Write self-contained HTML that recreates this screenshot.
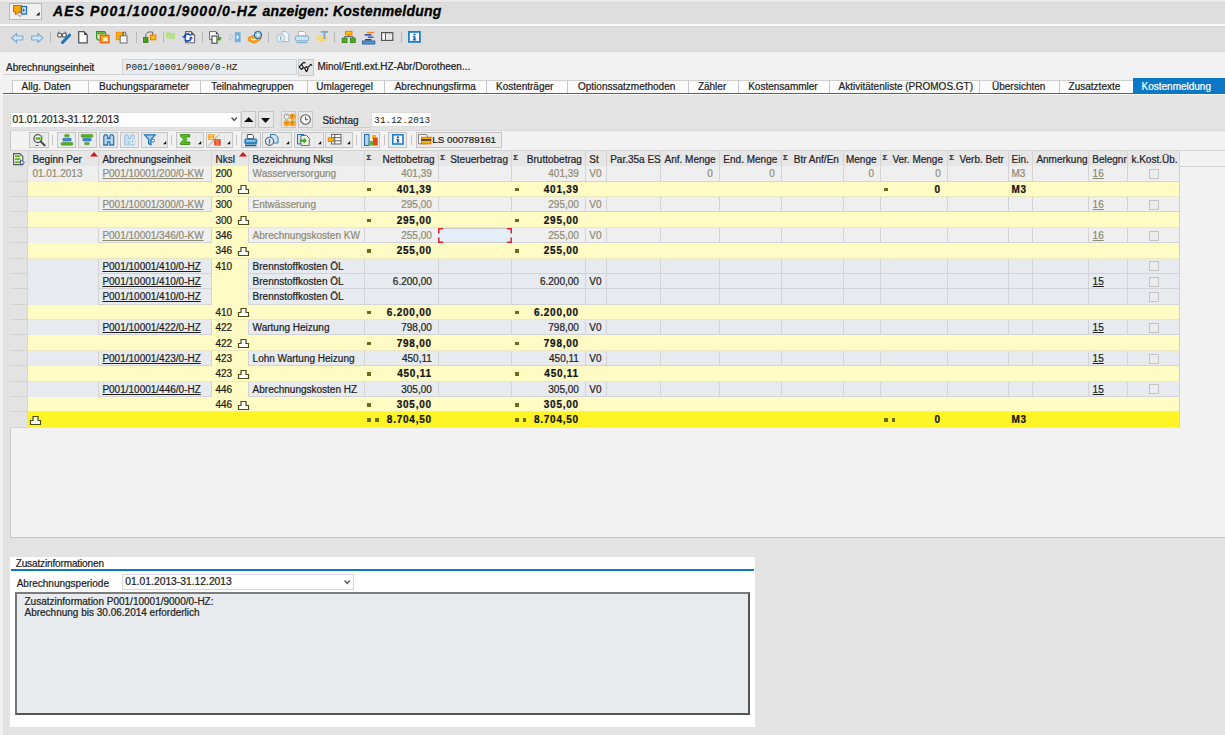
<!DOCTYPE html><html><head><meta charset="utf-8"><style>
html,body{margin:0;padding:0;}
body{width:1225px;height:735px;overflow:hidden;position:relative;background:#f0f0f0;font-family:'Liberation Sans', sans-serif;font-size:10px;color:#222;-webkit-text-stroke-width:0.22px;}
div{box-sizing:border-box;}
.t{position:absolute;white-space:nowrap;line-height:12px;}
svg{position:absolute;overflow:visible;}

</style></head><body>
<div style="position:absolute;left:0px;top:0px;width:1225px;height:25px;background:#dedede;"></div>
<div style="position:absolute;left:0px;top:0px;width:1225px;height:1.5px;background:#ebebeb;"></div>
<div style="position:absolute;left:0px;top:1.5px;width:1225px;height:1px;background:#d6d6d6;"></div>
<div style="position:absolute;left:0px;top:24.4px;width:1225px;height:1.4px;background:#f9f9f9;"></div>
<div style="position:absolute;left:53px;top:3px;white-space:nowrap;font-size:14px;font-weight:bold;font-style:italic;color:#000;letter-spacing:1.1px;line-height:16px;-webkit-text-stroke-width:0.3px;">AES P001/10001/9000/0-HZ</div>
<div style="position:absolute;left:262.6px;top:3px;white-space:nowrap;font-size:14px;font-weight:bold;font-style:italic;color:#000;letter-spacing:0.2px;line-height:16px;-webkit-text-stroke-width:0.3px;">anzeigen: Kostenmeldung</div>
<div style="position:absolute;left:0px;top:25.8px;width:1225px;height:25.7px;background:#dedede;"></div>
<div style="position:absolute;left:0px;top:25.8px;width:1225px;height:1.7px;background:#d8d8d8;"></div>
<div style="position:absolute;left:0px;top:50.5px;width:1225px;height:1px;background:#d9d9d9;"></div>
<div style="position:absolute;left:0px;top:51.5px;width:1225px;height:43.5px;background:#f2f2f2;"></div>
<div style="position:absolute;left:6px;top:61.8px;white-space:nowrap;font-size:10px;color:#222;line-height:12px;">Abrechnungseinheit</div>
<div style="position:absolute;left:3px;top:74px;width:119px;height:1px;background:#cfcfcf;"></div>
<div style="position:absolute;left:122px;top:59px;width:175px;height:15.5px;background:#e9ecef;border:1px solid #cfd3d6;"></div>
<div style="position:absolute;left:125.8px;top:61.5px;white-space:nowrap;font-family:'Liberation Mono', monospace;font-size:9.3px;color:#222;line-height:12px;-webkit-text-stroke-width:0;">P001/10001/9000/0-HZ</div>
<div style="position:absolute;left:298px;top:58.5px;width:16px;height:17px;background:#e6e6e6;border:1px solid #c9c9c9;"></div>
<div style="position:absolute;left:317.4px;top:61px;white-space:nowrap;font-size:10px;color:#222;line-height:12px;">Minol/Entl.ext.HZ-Abr/Dorotheen...</div>
<div style="position:absolute;left:12.2px;top:80px;width:1120.3999999999999px;height:13.5px;background:#fbfbfb;border-top:1px solid #cfcfcf;"></div>
<div style="position:absolute;left:12.2px;top:80px;width:1px;height:13.5px;background:#c6c6c6;"></div>
<div class="t" style="left:21.6px;top:81.2px;color:#222;">Allg. Daten</div>
<div style="position:absolute;left:88.2px;top:80px;width:1px;height:13.5px;background:#c6c6c6;"></div>
<div class="t" style="left:99px;top:81.2px;color:#222;">Buchungsparameter</div>
<div style="position:absolute;left:200.3px;top:80px;width:1px;height:13.5px;background:#c6c6c6;"></div>
<div class="t" style="left:211.3px;top:81.2px;color:#222;">Teilnahmegruppen</div>
<div style="position:absolute;left:306.6px;top:80px;width:1px;height:13.5px;background:#c6c6c6;"></div>
<div class="t" style="left:316.2px;top:81.2px;color:#222;">Umlageregel</div>
<div style="position:absolute;left:383.7px;top:80px;width:1px;height:13.5px;background:#c6c6c6;"></div>
<div class="t" style="left:394.7px;top:81.2px;color:#222;">Abrechnungsfirma</div>
<div style="position:absolute;left:485.9px;top:80px;width:1px;height:13.5px;background:#c6c6c6;"></div>
<div class="t" style="left:496.1px;top:81.2px;color:#222;">Kostenträger</div>
<div style="position:absolute;left:567.3px;top:80px;width:1px;height:13.5px;background:#c6c6c6;"></div>
<div class="t" style="left:578px;top:81.2px;color:#222;">Optionssatzmethoden</div>
<div style="position:absolute;left:688.2px;top:80px;width:1px;height:13.5px;background:#c6c6c6;"></div>
<div class="t" style="left:697.9px;top:81.2px;color:#222;">Zähler</div>
<div style="position:absolute;left:737.6px;top:80px;width:1px;height:13.5px;background:#c6c6c6;"></div>
<div class="t" style="left:748.2px;top:81.2px;color:#222;">Kostensammler</div>
<div style="position:absolute;left:828.5px;top:80px;width:1px;height:13.5px;background:#c6c6c6;"></div>
<div class="t" style="left:838.6px;top:81.2px;color:#222;">Aktivitätenliste (PROMOS.GT)</div>
<div style="position:absolute;left:978.7px;top:80px;width:1px;height:13.5px;background:#c6c6c6;"></div>
<div class="t" style="left:992px;top:81.2px;color:#222;">Übersichten</div>
<div style="position:absolute;left:1058.7px;top:80px;width:1px;height:13.5px;background:#c6c6c6;"></div>
<div class="t" style="left:1068.6px;top:81.2px;color:#222;">Zusatztexte</div>
<div style="position:absolute;left:1132.6px;top:77.7px;width:92.40000000000009px;height:16px;background:#0a78c6;"></div>
<div class="t" style="left:1141.5px;top:80.6px;color:#fff;">Kostenmeldung</div>
<div style="position:absolute;left:3px;top:92.5px;width:1222px;height:1.6px;background:#0a78c6;"></div>
<div style="position:absolute;left:3px;top:94px;width:1222px;height:1px;background:#f8f8f8;"></div>
<div style="position:absolute;left:3px;top:95px;width:1222px;height:640px;background:#e3e3e3;"></div>
<div style="position:absolute;left:9.6px;top:112.3px;width:231px;height:15.4px;background:#fff;border:1px solid #dcdcdc;"></div>
<div style="position:absolute;left:12.5px;top:114px;white-space:nowrap;font-size:10.3px;color:#222;line-height:12px;">01.01.2013-31.12.2013</div>
<div style="position:absolute;left:241.2px;top:111.4px;width:15.300000000000011px;height:17px;background:#e8e8e8;border:1px solid #c6c6c6;"></div>
<div style="position:absolute;left:258.4px;top:111.4px;width:15.300000000000011px;height:17px;background:#e8e8e8;border:1px solid #c6c6c6;"></div>
<div style="position:absolute;left:281px;top:111.4px;width:15.300000000000011px;height:17px;background:#e8e8e8;border:1px solid #c6c6c6;"></div>
<div style="position:absolute;left:298.2px;top:111.4px;width:15.300000000000011px;height:17px;background:#e8e8e8;border:1px solid #c6c6c6;"></div>
<div style="position:absolute;left:320.5px;top:127px;width:50.5px;height:1px;background:#cdcdcd;"></div>
<div style="position:absolute;left:322.4px;top:115.2px;white-space:nowrap;font-size:10px;color:#222;line-height:12px;">Stichtag</div>
<div style="position:absolute;left:371.2px;top:112.3px;width:61.2px;height:15px;background:#fff;border:1px solid #dcdcdc;"></div>
<div style="position:absolute;left:374.3px;top:114.8px;white-space:nowrap;font-family:'Liberation Mono', monospace;font-size:9.3px;color:#222;line-height:12px;-webkit-text-stroke-width:0;">31.12.2013</div>
<div style="position:absolute;left:9.6px;top:129.8px;width:1215.4px;height:408.2px;background:#f2f2f2;border-left:1px solid #c9c9c9;border-bottom:1px solid #c6c6c6;border-top:1px solid #d8d8d8;"></div>
<div style="position:absolute;left:9.6px;top:150.0px;width:1215.4px;height:1px;background:#d2d2d2;"></div>
<div style="position:absolute;left:9.6px;top:165.8px;width:1215.4px;height:1px;background:#cfcfcf;"></div>
<div style="position:absolute;left:10px;top:151.0px;width:1169.7px;height:14.800000000000011px;background:#e6e6e6;"></div>
<div style="position:absolute;left:27.9px;top:151.0px;width:1px;height:14.800000000000011px;background:#d6d6d6;"></div>
<div style="position:absolute;left:97.6px;top:151.0px;width:1px;height:14.800000000000011px;background:#d6d6d6;"></div>
<div style="position:absolute;left:210.9px;top:151.0px;width:1px;height:14.800000000000011px;background:#d6d6d6;"></div>
<div style="position:absolute;left:247.7px;top:151.0px;width:1px;height:14.800000000000011px;background:#d6d6d6;"></div>
<div style="position:absolute;left:363.7px;top:151.0px;width:1px;height:14.800000000000011px;background:#d6d6d6;"></div>
<div style="position:absolute;left:438.1px;top:151.0px;width:1px;height:14.800000000000011px;background:#d6d6d6;"></div>
<div style="position:absolute;left:511.3px;top:151.0px;width:1px;height:14.800000000000011px;background:#d6d6d6;"></div>
<div style="position:absolute;left:585.2px;top:151.0px;width:1px;height:14.800000000000011px;background:#d6d6d6;"></div>
<div style="position:absolute;left:606.1px;top:151.0px;width:1px;height:14.800000000000011px;background:#d6d6d6;"></div>
<div style="position:absolute;left:659.6px;top:151.0px;width:1px;height:14.800000000000011px;background:#d6d6d6;"></div>
<div style="position:absolute;left:719.0px;top:151.0px;width:1px;height:14.800000000000011px;background:#d6d6d6;"></div>
<div style="position:absolute;left:781.0px;top:151.0px;width:1px;height:14.800000000000011px;background:#d6d6d6;"></div>
<div style="position:absolute;left:842.5px;top:151.0px;width:1px;height:14.800000000000011px;background:#d6d6d6;"></div>
<div style="position:absolute;left:880.3px;top:151.0px;width:1px;height:14.800000000000011px;background:#d6d6d6;"></div>
<div style="position:absolute;left:947.1px;top:151.0px;width:1px;height:14.800000000000011px;background:#d6d6d6;"></div>
<div style="position:absolute;left:1008.0px;top:151.0px;width:1px;height:14.800000000000011px;background:#d6d6d6;"></div>
<div style="position:absolute;left:1032.3px;top:151.0px;width:1px;height:14.800000000000011px;background:#d6d6d6;"></div>
<div style="position:absolute;left:1088.2px;top:151.0px;width:1px;height:14.800000000000011px;background:#d6d6d6;"></div>
<div style="position:absolute;left:1126.9px;top:151.0px;width:1px;height:14.800000000000011px;background:#d6d6d6;"></div>
<div style="position:absolute;left:1179.2px;top:151.0px;width:1px;height:14.800000000000011px;background:#d6d6d6;"></div>
<div class="t" style="left:32.4px;top:154.3px;color:#1f1f2a;">Beginn Per</div>
<div class="t" style="left:102.4px;top:154.3px;color:#1f1f2a;">Abrechnungseinheit</div>
<div class="t" style="left:215.5px;top:154.3px;color:#1f1f2a;">Nksl</div>
<div class="t" style="left:252.6px;top:154.3px;color:#1f1f2a;">Bezeichnung Nksl</div>
<div class="t" style="left:234.7px;width:200px;text-align:right;top:154.3px;color:#1f1f2a;">Nettobetrag</div>
<div class="t" style="left:308px;width:200px;text-align:right;top:154.3px;color:#1f1f2a;">Steuerbetrag</div>
<div class="t" style="left:381.9px;width:200px;text-align:right;top:154.3px;color:#1f1f2a;">Bruttobetrag</div>
<div class="t" style="left:589.3px;top:154.3px;color:#1f1f2a;">St</div>
<div class="t" style="left:610.2px;top:154.3px;color:#1f1f2a;">Par.35a ES</div>
<div class="t" style="left:515.7px;width:200px;text-align:right;top:154.3px;color:#1f1f2a;">Anf. Menge</div>
<div class="t" style="left:577.3px;width:200px;text-align:right;top:154.3px;color:#1f1f2a;">End. Menge</div>
<div class="t" style="left:638.9px;width:200px;text-align:right;top:154.3px;color:#1f1f2a;">Btr Anf/En</div>
<div class="t" style="left:676.5px;width:200px;text-align:right;top:154.3px;color:#1f1f2a;">Menge</div>
<div class="t" style="left:743px;width:200px;text-align:right;top:154.3px;color:#1f1f2a;">Ver. Menge</div>
<div class="t" style="left:803.9px;width:200px;text-align:right;top:154.3px;color:#1f1f2a;">Verb. Betr</div>
<div class="t" style="left:1011.5px;top:154.3px;color:#1f1f2a;">Ein.</div>
<div class="t" style="left:1036.4px;top:154.3px;color:#1f1f2a;">Anmerkung</div>
<div class="t" style="left:1092.3px;top:154.3px;color:#1f1f2a;">Belegnr</div>
<div class="t" style="left:1131.4px;top:154.3px;color:#1f1f2a;">k.Kost.Üb.</div>
<div class="t" style="left:366.4px;top:152.0px;font-size:8px;font-weight:bold;color:#333;">&Sigma;</div>
<div class="t" style="left:440.3px;top:152.0px;font-size:8px;font-weight:bold;color:#333;">&Sigma;</div>
<div class="t" style="left:513.3px;top:152.0px;font-size:8px;font-weight:bold;color:#333;">&Sigma;</div>
<div class="t" style="left:783px;top:152.0px;font-size:8px;font-weight:bold;color:#333;">&Sigma;</div>
<div class="t" style="left:882.5px;top:152.0px;font-size:8px;font-weight:bold;color:#333;">&Sigma;</div>
<div class="t" style="left:949.3px;top:152.0px;font-size:8px;font-weight:bold;color:#333;">&Sigma;</div>
<svg style="left:89.5px;top:152.0px" width="8" height="5"><path d="M0,4.5 L4,0 L8,4.5Z" fill="#d2141e"/></svg>
<svg style="left:239px;top:152.0px" width="8" height="5"><path d="M0,4.5 L4,0 L8,4.5Z" fill="#d2141e"/></svg>
<div style="position:absolute;left:10px;top:166.3px;width:18.4px;height:15.38px;background:#e3e3e3;border-bottom:1px solid #d3d3d3;border-right:1px solid #d6d6d6;"></div>
<div style="position:absolute;left:10px;top:181.68px;width:18.4px;height:15.38px;background:#e3e3e3;border-bottom:1px solid #d3d3d3;border-right:1px solid #d6d6d6;"></div>
<div style="position:absolute;left:10px;top:197.06px;width:18.4px;height:15.38px;background:#e3e3e3;border-bottom:1px solid #d3d3d3;border-right:1px solid #d6d6d6;"></div>
<div style="position:absolute;left:10px;top:212.44px;width:18.4px;height:15.38px;background:#e3e3e3;border-bottom:1px solid #d3d3d3;border-right:1px solid #d6d6d6;"></div>
<div style="position:absolute;left:10px;top:227.82000000000002px;width:18.4px;height:15.38px;background:#e3e3e3;border-bottom:1px solid #d3d3d3;border-right:1px solid #d6d6d6;"></div>
<div style="position:absolute;left:10px;top:243.20000000000002px;width:18.4px;height:15.38px;background:#e3e3e3;border-bottom:1px solid #d3d3d3;border-right:1px solid #d6d6d6;"></div>
<div style="position:absolute;left:10px;top:258.58000000000004px;width:18.4px;height:15.38px;background:#e3e3e3;border-bottom:1px solid #d3d3d3;border-right:1px solid #d6d6d6;"></div>
<div style="position:absolute;left:10px;top:273.96000000000004px;width:18.4px;height:15.38px;background:#e3e3e3;border-bottom:1px solid #d3d3d3;border-right:1px solid #d6d6d6;"></div>
<div style="position:absolute;left:10px;top:289.34000000000003px;width:18.4px;height:15.38px;background:#e3e3e3;border-bottom:1px solid #d3d3d3;border-right:1px solid #d6d6d6;"></div>
<div style="position:absolute;left:10px;top:304.72px;width:18.4px;height:15.38px;background:#e3e3e3;border-bottom:1px solid #d3d3d3;border-right:1px solid #d6d6d6;"></div>
<div style="position:absolute;left:10px;top:320.1px;width:18.4px;height:15.38px;background:#e3e3e3;border-bottom:1px solid #d3d3d3;border-right:1px solid #d6d6d6;"></div>
<div style="position:absolute;left:10px;top:335.48px;width:18.4px;height:15.38px;background:#e3e3e3;border-bottom:1px solid #d3d3d3;border-right:1px solid #d6d6d6;"></div>
<div style="position:absolute;left:10px;top:350.86px;width:18.4px;height:15.38px;background:#e3e3e3;border-bottom:1px solid #d3d3d3;border-right:1px solid #d6d6d6;"></div>
<div style="position:absolute;left:10px;top:366.24px;width:18.4px;height:15.38px;background:#e3e3e3;border-bottom:1px solid #d3d3d3;border-right:1px solid #d6d6d6;"></div>
<div style="position:absolute;left:10px;top:381.62px;width:18.4px;height:15.38px;background:#e3e3e3;border-bottom:1px solid #d3d3d3;border-right:1px solid #d6d6d6;"></div>
<div style="position:absolute;left:10px;top:397.0px;width:18.4px;height:15.38px;background:#e3e3e3;border-bottom:1px solid #d3d3d3;border-right:1px solid #d6d6d6;"></div>
<div style="position:absolute;left:10px;top:412.38px;width:18.4px;height:15.38px;background:#e3e3e3;border-bottom:1px solid #d3d3d3;border-right:1px solid #d6d6d6;"></div>
<div style="position:absolute;left:28.4px;top:166.3px;width:1151.3px;height:15.38px;background:#efeff0;"></div>
<div style="position:absolute;left:211.4px;top:166.3px;width:36.79999999999998px;height:15.38px;background:#fffbc4;"></div>
<div style="position:absolute;left:98.1px;top:180.68px;width:113.30000000000001px;height:1px;background:#d2d3d5;"></div>
<div style="position:absolute;left:248.2px;top:180.68px;width:931.5px;height:1px;background:#d2d3d5;"></div>
<div style="position:absolute;left:97.6px;top:166.3px;width:1px;height:15.38px;background:#d2d3d5;"></div>
<div style="position:absolute;left:210.9px;top:166.3px;width:1px;height:15.38px;background:#d2d3d5;"></div>
<div style="position:absolute;left:247.7px;top:166.3px;width:1px;height:15.38px;background:#d2d3d5;"></div>
<div style="position:absolute;left:363.7px;top:166.3px;width:1px;height:15.38px;background:#d2d3d5;"></div>
<div style="position:absolute;left:438.1px;top:166.3px;width:1px;height:15.38px;background:#d2d3d5;"></div>
<div style="position:absolute;left:511.3px;top:166.3px;width:1px;height:15.38px;background:#d2d3d5;"></div>
<div style="position:absolute;left:585.2px;top:166.3px;width:1px;height:15.38px;background:#d2d3d5;"></div>
<div style="position:absolute;left:606.1px;top:166.3px;width:1px;height:15.38px;background:#d2d3d5;"></div>
<div style="position:absolute;left:659.6px;top:166.3px;width:1px;height:15.38px;background:#d2d3d5;"></div>
<div style="position:absolute;left:719.0px;top:166.3px;width:1px;height:15.38px;background:#d2d3d5;"></div>
<div style="position:absolute;left:781.0px;top:166.3px;width:1px;height:15.38px;background:#d2d3d5;"></div>
<div style="position:absolute;left:842.5px;top:166.3px;width:1px;height:15.38px;background:#d2d3d5;"></div>
<div style="position:absolute;left:880.3px;top:166.3px;width:1px;height:15.38px;background:#d2d3d5;"></div>
<div style="position:absolute;left:947.1px;top:166.3px;width:1px;height:15.38px;background:#d2d3d5;"></div>
<div style="position:absolute;left:1008.0px;top:166.3px;width:1px;height:15.38px;background:#d2d3d5;"></div>
<div style="position:absolute;left:1032.3px;top:166.3px;width:1px;height:15.38px;background:#d2d3d5;"></div>
<div style="position:absolute;left:1088.2px;top:166.3px;width:1px;height:15.38px;background:#d2d3d5;"></div>
<div style="position:absolute;left:1126.9px;top:166.3px;width:1px;height:15.38px;background:#d2d3d5;"></div>
<div class="t" style="left:32.4px;top:168.4px;color:#8f8b73;">01.01.2013</div>
<div class="t" style="left:102.4px;top:168.4px;color:#8f8b73;text-decoration:underline;">P001/10001/200/0-KW</div>
<div class="t" style="left:215.5px;top:168.4px;color:#1a1a1a;">200</div>
<div class="t" style="left:252.6px;top:168.4px;color:#8f8b73;">Wasserversorgung</div>
<div class="t" style="left:281.8px;width:150px;text-align:right;top:168.4px;color:#8f8b73;">401,39</div>
<div class="t" style="left:428.9000000000001px;width:150px;text-align:right;top:168.4px;color:#8f8b73;">401,39</div>
<div class="t" style="left:562.7px;width:150px;text-align:right;top:168.4px;color:#8f8b73;">0</div>
<div class="t" style="left:624.7px;width:150px;text-align:right;top:168.4px;color:#8f8b73;">0</div>
<div class="t" style="left:724.0px;width:150px;text-align:right;top:168.4px;color:#8f8b73;">0</div>
<div class="t" style="left:790.8000000000001px;width:150px;text-align:right;top:168.4px;color:#8f8b73;">0</div>
<div class="t" style="left:589.3px;top:168.4px;color:#8f8b73;">V0</div>
<div class="t" style="left:1011.5px;top:168.4px;color:#8f8b73;">M3</div>
<div class="t" style="left:1092.6px;top:168.4px;color:#8f8b73;text-decoration:underline;">16</div>
<div style="position:absolute;left:1149.1px;top:169.10000000000002px;width:10.3px;height:10px;border:1px solid #c3c3c3;background:#ececec;"></div>
<div style="position:absolute;left:28.4px;top:181.68px;width:1151.3px;height:15.38px;background:#fffbc4;border-bottom:1px solid #ece9c0;"></div>
<div class="t" style="left:215.5px;top:183.78px;color:#1a1a1a;">200</div>
<svg style="left:238px;top:185.28px" width="11" height="9"><path d="M3,0.5 H8 V4.5 H10.5 V8.5 H0.5 V4.5 H3 Z" fill="#fff" stroke="#4a4a14" stroke-width="1.2"/></svg>
<div class="t" style="left:281.8px;width:150px;text-align:right;top:183.78px;font-weight:bold;color:#111;letter-spacing:0.75px;">401,39</div>
<div style="position:absolute;left:367.4px;top:187.78px;width:3.5px;height:3.5px;background:#6b6b1f;"></div>
<div class="t" style="left:428.9000000000001px;width:150px;text-align:right;top:183.78px;font-weight:bold;color:#111;letter-spacing:0.75px;">401,39</div>
<div style="position:absolute;left:515.0px;top:187.78px;width:3.5px;height:3.5px;background:#6b6b1f;"></div>
<div class="t" style="left:790.8000000000001px;width:150px;text-align:right;top:183.78px;font-weight:bold;color:#111;letter-spacing:0.75px;">0</div>
<div style="position:absolute;left:884.0px;top:187.78px;width:3.5px;height:3.5px;background:#6b6b1f;"></div>
<div class="t" style="left:1011.5px;top:183.78px;font-weight:bold;color:#111;letter-spacing:0.6px;">M3</div>
<div style="position:absolute;left:28.4px;top:197.06px;width:1151.3px;height:15.38px;background:#efeff0;"></div>
<div style="position:absolute;left:211.4px;top:197.06px;width:36.79999999999998px;height:15.38px;background:#fffbc4;"></div>
<div style="position:absolute;left:98.1px;top:211.44px;width:113.30000000000001px;height:1px;background:#d2d3d5;"></div>
<div style="position:absolute;left:248.2px;top:211.44px;width:931.5px;height:1px;background:#d2d3d5;"></div>
<div style="position:absolute;left:97.6px;top:197.06px;width:1px;height:15.38px;background:#d2d3d5;"></div>
<div style="position:absolute;left:210.9px;top:197.06px;width:1px;height:15.38px;background:#d2d3d5;"></div>
<div style="position:absolute;left:247.7px;top:197.06px;width:1px;height:15.38px;background:#d2d3d5;"></div>
<div style="position:absolute;left:363.7px;top:197.06px;width:1px;height:15.38px;background:#d2d3d5;"></div>
<div style="position:absolute;left:438.1px;top:197.06px;width:1px;height:15.38px;background:#d2d3d5;"></div>
<div style="position:absolute;left:511.3px;top:197.06px;width:1px;height:15.38px;background:#d2d3d5;"></div>
<div style="position:absolute;left:585.2px;top:197.06px;width:1px;height:15.38px;background:#d2d3d5;"></div>
<div style="position:absolute;left:606.1px;top:197.06px;width:1px;height:15.38px;background:#d2d3d5;"></div>
<div style="position:absolute;left:659.6px;top:197.06px;width:1px;height:15.38px;background:#d2d3d5;"></div>
<div style="position:absolute;left:719.0px;top:197.06px;width:1px;height:15.38px;background:#d2d3d5;"></div>
<div style="position:absolute;left:781.0px;top:197.06px;width:1px;height:15.38px;background:#d2d3d5;"></div>
<div style="position:absolute;left:842.5px;top:197.06px;width:1px;height:15.38px;background:#d2d3d5;"></div>
<div style="position:absolute;left:880.3px;top:197.06px;width:1px;height:15.38px;background:#d2d3d5;"></div>
<div style="position:absolute;left:947.1px;top:197.06px;width:1px;height:15.38px;background:#d2d3d5;"></div>
<div style="position:absolute;left:1008.0px;top:197.06px;width:1px;height:15.38px;background:#d2d3d5;"></div>
<div style="position:absolute;left:1032.3px;top:197.06px;width:1px;height:15.38px;background:#d2d3d5;"></div>
<div style="position:absolute;left:1088.2px;top:197.06px;width:1px;height:15.38px;background:#d2d3d5;"></div>
<div style="position:absolute;left:1126.9px;top:197.06px;width:1px;height:15.38px;background:#d2d3d5;"></div>
<div class="t" style="left:102.4px;top:199.16px;color:#8f8b73;text-decoration:underline;">P001/10001/300/0-KW</div>
<div class="t" style="left:215.5px;top:199.16px;color:#1a1a1a;">300</div>
<div class="t" style="left:252.6px;top:199.16px;color:#8f8b73;">Entwässerung</div>
<div class="t" style="left:281.8px;width:150px;text-align:right;top:199.16px;color:#8f8b73;">295,00</div>
<div class="t" style="left:428.9000000000001px;width:150px;text-align:right;top:199.16px;color:#8f8b73;">295,00</div>
<div class="t" style="left:589.3px;top:199.16px;color:#8f8b73;">V0</div>
<div class="t" style="left:1092.6px;top:199.16px;color:#8f8b73;text-decoration:underline;">16</div>
<div style="position:absolute;left:1149.1px;top:199.86px;width:10.3px;height:10px;border:1px solid #c3c3c3;background:#ececec;"></div>
<div style="position:absolute;left:28.4px;top:212.44px;width:1151.3px;height:15.38px;background:#fffbc4;border-bottom:1px solid #ece9c0;"></div>
<div class="t" style="left:215.5px;top:214.54px;color:#1a1a1a;">300</div>
<svg style="left:238px;top:216.04px" width="11" height="9"><path d="M3,0.5 H8 V4.5 H10.5 V8.5 H0.5 V4.5 H3 Z" fill="#fff" stroke="#4a4a14" stroke-width="1.2"/></svg>
<div class="t" style="left:281.8px;width:150px;text-align:right;top:214.54px;font-weight:bold;color:#111;letter-spacing:0.75px;">295,00</div>
<div style="position:absolute;left:367.4px;top:218.54px;width:3.5px;height:3.5px;background:#6b6b1f;"></div>
<div class="t" style="left:428.9000000000001px;width:150px;text-align:right;top:214.54px;font-weight:bold;color:#111;letter-spacing:0.75px;">295,00</div>
<div style="position:absolute;left:515.0px;top:218.54px;width:3.5px;height:3.5px;background:#6b6b1f;"></div>
<div style="position:absolute;left:28.4px;top:227.82000000000002px;width:1151.3px;height:15.38px;background:#efeff0;"></div>
<div style="position:absolute;left:211.4px;top:227.82000000000002px;width:36.79999999999998px;height:15.38px;background:#fffbc4;"></div>
<div style="position:absolute;left:98.1px;top:242.20000000000002px;width:113.30000000000001px;height:1px;background:#d2d3d5;"></div>
<div style="position:absolute;left:248.2px;top:242.20000000000002px;width:931.5px;height:1px;background:#d2d3d5;"></div>
<div style="position:absolute;left:97.6px;top:227.82000000000002px;width:1px;height:15.38px;background:#d2d3d5;"></div>
<div style="position:absolute;left:210.9px;top:227.82000000000002px;width:1px;height:15.38px;background:#d2d3d5;"></div>
<div style="position:absolute;left:247.7px;top:227.82000000000002px;width:1px;height:15.38px;background:#d2d3d5;"></div>
<div style="position:absolute;left:363.7px;top:227.82000000000002px;width:1px;height:15.38px;background:#d2d3d5;"></div>
<div style="position:absolute;left:438.1px;top:227.82000000000002px;width:1px;height:15.38px;background:#d2d3d5;"></div>
<div style="position:absolute;left:511.3px;top:227.82000000000002px;width:1px;height:15.38px;background:#d2d3d5;"></div>
<div style="position:absolute;left:585.2px;top:227.82000000000002px;width:1px;height:15.38px;background:#d2d3d5;"></div>
<div style="position:absolute;left:606.1px;top:227.82000000000002px;width:1px;height:15.38px;background:#d2d3d5;"></div>
<div style="position:absolute;left:659.6px;top:227.82000000000002px;width:1px;height:15.38px;background:#d2d3d5;"></div>
<div style="position:absolute;left:719.0px;top:227.82000000000002px;width:1px;height:15.38px;background:#d2d3d5;"></div>
<div style="position:absolute;left:781.0px;top:227.82000000000002px;width:1px;height:15.38px;background:#d2d3d5;"></div>
<div style="position:absolute;left:842.5px;top:227.82000000000002px;width:1px;height:15.38px;background:#d2d3d5;"></div>
<div style="position:absolute;left:880.3px;top:227.82000000000002px;width:1px;height:15.38px;background:#d2d3d5;"></div>
<div style="position:absolute;left:947.1px;top:227.82000000000002px;width:1px;height:15.38px;background:#d2d3d5;"></div>
<div style="position:absolute;left:1008.0px;top:227.82000000000002px;width:1px;height:15.38px;background:#d2d3d5;"></div>
<div style="position:absolute;left:1032.3px;top:227.82000000000002px;width:1px;height:15.38px;background:#d2d3d5;"></div>
<div style="position:absolute;left:1088.2px;top:227.82000000000002px;width:1px;height:15.38px;background:#d2d3d5;"></div>
<div style="position:absolute;left:1126.9px;top:227.82000000000002px;width:1px;height:15.38px;background:#d2d3d5;"></div>
<div class="t" style="left:102.4px;top:229.92000000000002px;color:#8f8b73;text-decoration:underline;">P001/10001/346/0-KW</div>
<div class="t" style="left:215.5px;top:229.92000000000002px;color:#1a1a1a;">346</div>
<div class="t" style="left:252.6px;top:229.92000000000002px;color:#8f8b73;">Abrechnungskosten KW</div>
<div class="t" style="left:281.8px;width:150px;text-align:right;top:229.92000000000002px;color:#8f8b73;">255,00</div>
<div class="t" style="left:428.9000000000001px;width:150px;text-align:right;top:229.92000000000002px;color:#8f8b73;">255,00</div>
<div class="t" style="left:589.3px;top:229.92000000000002px;color:#8f8b73;">V0</div>
<div class="t" style="left:1092.6px;top:229.92000000000002px;color:#8f8b73;text-decoration:underline;">16</div>
<div style="position:absolute;left:1149.1px;top:230.62000000000003px;width:10.3px;height:10px;border:1px solid #c3c3c3;background:#ececec;"></div>
<div style="position:absolute;left:438.1px;top:228.32000000000002px;width:74px;height:15px;background:#e3eef8;border-top:1px solid #c9c9c9;border-bottom:1px solid #c9c9c9;"></div>
<svg style="left:438.1px;top:228.32000000000002px" width="74" height="15"><path d="M5,0.8 H0.8 V5.5 M0.8,9.5 V14.2 H5 M69,0.8 H73.2 V5.5 M73.2,9.5 V14.2 H69" fill="none" stroke="#e0202a" stroke-width="1.5"/></svg>
<div style="position:absolute;left:28.4px;top:243.20000000000002px;width:1151.3px;height:15.38px;background:#fffbc4;border-bottom:1px solid #ece9c0;"></div>
<div class="t" style="left:215.5px;top:245.3px;color:#1a1a1a;">346</div>
<svg style="left:238px;top:246.8px" width="11" height="9"><path d="M3,0.5 H8 V4.5 H10.5 V8.5 H0.5 V4.5 H3 Z" fill="#fff" stroke="#4a4a14" stroke-width="1.2"/></svg>
<div class="t" style="left:281.8px;width:150px;text-align:right;top:245.3px;font-weight:bold;color:#111;letter-spacing:0.75px;">255,00</div>
<div style="position:absolute;left:367.4px;top:249.3px;width:3.5px;height:3.5px;background:#6b6b1f;"></div>
<div class="t" style="left:428.9000000000001px;width:150px;text-align:right;top:245.3px;font-weight:bold;color:#111;letter-spacing:0.75px;">255,00</div>
<div style="position:absolute;left:515.0px;top:249.3px;width:3.5px;height:3.5px;background:#6b6b1f;"></div>
<div style="position:absolute;left:28.4px;top:258.58000000000004px;width:1151.3px;height:15.38px;background:#e7eaee;"></div>
<div style="position:absolute;left:211.4px;top:258.58000000000004px;width:36.79999999999998px;height:15.38px;background:#fffbc4;"></div>
<div style="position:absolute;left:98.1px;top:272.96000000000004px;width:113.30000000000001px;height:1px;background:#d2d3d5;"></div>
<div style="position:absolute;left:248.2px;top:272.96000000000004px;width:931.5px;height:1px;background:#d2d3d5;"></div>
<div style="position:absolute;left:97.6px;top:258.58000000000004px;width:1px;height:15.38px;background:#d2d3d5;"></div>
<div style="position:absolute;left:210.9px;top:258.58000000000004px;width:1px;height:15.38px;background:#d2d3d5;"></div>
<div style="position:absolute;left:247.7px;top:258.58000000000004px;width:1px;height:15.38px;background:#d2d3d5;"></div>
<div style="position:absolute;left:363.7px;top:258.58000000000004px;width:1px;height:15.38px;background:#d2d3d5;"></div>
<div style="position:absolute;left:438.1px;top:258.58000000000004px;width:1px;height:15.38px;background:#d2d3d5;"></div>
<div style="position:absolute;left:511.3px;top:258.58000000000004px;width:1px;height:15.38px;background:#d2d3d5;"></div>
<div style="position:absolute;left:585.2px;top:258.58000000000004px;width:1px;height:15.38px;background:#d2d3d5;"></div>
<div style="position:absolute;left:606.1px;top:258.58000000000004px;width:1px;height:15.38px;background:#d2d3d5;"></div>
<div style="position:absolute;left:659.6px;top:258.58000000000004px;width:1px;height:15.38px;background:#d2d3d5;"></div>
<div style="position:absolute;left:719.0px;top:258.58000000000004px;width:1px;height:15.38px;background:#d2d3d5;"></div>
<div style="position:absolute;left:781.0px;top:258.58000000000004px;width:1px;height:15.38px;background:#d2d3d5;"></div>
<div style="position:absolute;left:842.5px;top:258.58000000000004px;width:1px;height:15.38px;background:#d2d3d5;"></div>
<div style="position:absolute;left:880.3px;top:258.58000000000004px;width:1px;height:15.38px;background:#d2d3d5;"></div>
<div style="position:absolute;left:947.1px;top:258.58000000000004px;width:1px;height:15.38px;background:#d2d3d5;"></div>
<div style="position:absolute;left:1008.0px;top:258.58000000000004px;width:1px;height:15.38px;background:#d2d3d5;"></div>
<div style="position:absolute;left:1032.3px;top:258.58000000000004px;width:1px;height:15.38px;background:#d2d3d5;"></div>
<div style="position:absolute;left:1088.2px;top:258.58000000000004px;width:1px;height:15.38px;background:#d2d3d5;"></div>
<div style="position:absolute;left:1126.9px;top:258.58000000000004px;width:1px;height:15.38px;background:#d2d3d5;"></div>
<div class="t" style="left:102.4px;top:260.68000000000006px;color:#1e1e1e;text-decoration:underline;">P001/10001/410/0-HZ</div>
<div class="t" style="left:215.5px;top:260.68000000000006px;color:#1a1a1a;">410</div>
<div class="t" style="left:252.6px;top:260.68000000000006px;color:#1e1e1e;">Brennstoffkosten ÖL</div>
<div style="position:absolute;left:1149.1px;top:261.38000000000005px;width:10.3px;height:10px;border:1px solid #c3c3c3;background:#ececec;"></div>
<div style="position:absolute;left:28.4px;top:273.96000000000004px;width:1151.3px;height:15.38px;background:#e7eaee;"></div>
<div style="position:absolute;left:211.4px;top:273.96000000000004px;width:36.79999999999998px;height:15.38px;background:#fffbc4;"></div>
<div style="position:absolute;left:98.1px;top:288.34000000000003px;width:113.30000000000001px;height:1px;background:#d2d3d5;"></div>
<div style="position:absolute;left:248.2px;top:288.34000000000003px;width:931.5px;height:1px;background:#d2d3d5;"></div>
<div style="position:absolute;left:97.6px;top:273.96000000000004px;width:1px;height:15.38px;background:#d2d3d5;"></div>
<div style="position:absolute;left:210.9px;top:273.96000000000004px;width:1px;height:15.38px;background:#d2d3d5;"></div>
<div style="position:absolute;left:247.7px;top:273.96000000000004px;width:1px;height:15.38px;background:#d2d3d5;"></div>
<div style="position:absolute;left:363.7px;top:273.96000000000004px;width:1px;height:15.38px;background:#d2d3d5;"></div>
<div style="position:absolute;left:438.1px;top:273.96000000000004px;width:1px;height:15.38px;background:#d2d3d5;"></div>
<div style="position:absolute;left:511.3px;top:273.96000000000004px;width:1px;height:15.38px;background:#d2d3d5;"></div>
<div style="position:absolute;left:585.2px;top:273.96000000000004px;width:1px;height:15.38px;background:#d2d3d5;"></div>
<div style="position:absolute;left:606.1px;top:273.96000000000004px;width:1px;height:15.38px;background:#d2d3d5;"></div>
<div style="position:absolute;left:659.6px;top:273.96000000000004px;width:1px;height:15.38px;background:#d2d3d5;"></div>
<div style="position:absolute;left:719.0px;top:273.96000000000004px;width:1px;height:15.38px;background:#d2d3d5;"></div>
<div style="position:absolute;left:781.0px;top:273.96000000000004px;width:1px;height:15.38px;background:#d2d3d5;"></div>
<div style="position:absolute;left:842.5px;top:273.96000000000004px;width:1px;height:15.38px;background:#d2d3d5;"></div>
<div style="position:absolute;left:880.3px;top:273.96000000000004px;width:1px;height:15.38px;background:#d2d3d5;"></div>
<div style="position:absolute;left:947.1px;top:273.96000000000004px;width:1px;height:15.38px;background:#d2d3d5;"></div>
<div style="position:absolute;left:1008.0px;top:273.96000000000004px;width:1px;height:15.38px;background:#d2d3d5;"></div>
<div style="position:absolute;left:1032.3px;top:273.96000000000004px;width:1px;height:15.38px;background:#d2d3d5;"></div>
<div style="position:absolute;left:1088.2px;top:273.96000000000004px;width:1px;height:15.38px;background:#d2d3d5;"></div>
<div style="position:absolute;left:1126.9px;top:273.96000000000004px;width:1px;height:15.38px;background:#d2d3d5;"></div>
<div class="t" style="left:102.4px;top:276.06000000000006px;color:#1e1e1e;text-decoration:underline;">P001/10001/410/0-HZ</div>
<div class="t" style="left:252.6px;top:276.06000000000006px;color:#1e1e1e;">Brennstoffkosten ÖL</div>
<div class="t" style="left:281.8px;width:150px;text-align:right;top:276.06000000000006px;color:#1e1e1e;">6.200,00</div>
<div class="t" style="left:428.9000000000001px;width:150px;text-align:right;top:276.06000000000006px;color:#1e1e1e;">6.200,00</div>
<div class="t" style="left:589.3px;top:276.06000000000006px;color:#1e1e1e;">V0</div>
<div class="t" style="left:1092.6px;top:276.06000000000006px;color:#1e1e1e;text-decoration:underline;">15</div>
<div style="position:absolute;left:1149.1px;top:276.76000000000005px;width:10.3px;height:10px;border:1px solid #c3c3c3;background:#ececec;"></div>
<div style="position:absolute;left:28.4px;top:289.34000000000003px;width:1151.3px;height:15.38px;background:#e7eaee;"></div>
<div style="position:absolute;left:211.4px;top:289.34000000000003px;width:36.79999999999998px;height:15.38px;background:#fffbc4;"></div>
<div style="position:absolute;left:98.1px;top:303.72px;width:113.30000000000001px;height:1px;background:#d2d3d5;"></div>
<div style="position:absolute;left:248.2px;top:303.72px;width:931.5px;height:1px;background:#d2d3d5;"></div>
<div style="position:absolute;left:97.6px;top:289.34000000000003px;width:1px;height:15.38px;background:#d2d3d5;"></div>
<div style="position:absolute;left:210.9px;top:289.34000000000003px;width:1px;height:15.38px;background:#d2d3d5;"></div>
<div style="position:absolute;left:247.7px;top:289.34000000000003px;width:1px;height:15.38px;background:#d2d3d5;"></div>
<div style="position:absolute;left:363.7px;top:289.34000000000003px;width:1px;height:15.38px;background:#d2d3d5;"></div>
<div style="position:absolute;left:438.1px;top:289.34000000000003px;width:1px;height:15.38px;background:#d2d3d5;"></div>
<div style="position:absolute;left:511.3px;top:289.34000000000003px;width:1px;height:15.38px;background:#d2d3d5;"></div>
<div style="position:absolute;left:585.2px;top:289.34000000000003px;width:1px;height:15.38px;background:#d2d3d5;"></div>
<div style="position:absolute;left:606.1px;top:289.34000000000003px;width:1px;height:15.38px;background:#d2d3d5;"></div>
<div style="position:absolute;left:659.6px;top:289.34000000000003px;width:1px;height:15.38px;background:#d2d3d5;"></div>
<div style="position:absolute;left:719.0px;top:289.34000000000003px;width:1px;height:15.38px;background:#d2d3d5;"></div>
<div style="position:absolute;left:781.0px;top:289.34000000000003px;width:1px;height:15.38px;background:#d2d3d5;"></div>
<div style="position:absolute;left:842.5px;top:289.34000000000003px;width:1px;height:15.38px;background:#d2d3d5;"></div>
<div style="position:absolute;left:880.3px;top:289.34000000000003px;width:1px;height:15.38px;background:#d2d3d5;"></div>
<div style="position:absolute;left:947.1px;top:289.34000000000003px;width:1px;height:15.38px;background:#d2d3d5;"></div>
<div style="position:absolute;left:1008.0px;top:289.34000000000003px;width:1px;height:15.38px;background:#d2d3d5;"></div>
<div style="position:absolute;left:1032.3px;top:289.34000000000003px;width:1px;height:15.38px;background:#d2d3d5;"></div>
<div style="position:absolute;left:1088.2px;top:289.34000000000003px;width:1px;height:15.38px;background:#d2d3d5;"></div>
<div style="position:absolute;left:1126.9px;top:289.34000000000003px;width:1px;height:15.38px;background:#d2d3d5;"></div>
<div class="t" style="left:102.4px;top:291.44000000000005px;color:#1e1e1e;text-decoration:underline;">P001/10001/410/0-HZ</div>
<div class="t" style="left:252.6px;top:291.44000000000005px;color:#1e1e1e;">Brennstoffkosten ÖL</div>
<div style="position:absolute;left:1149.1px;top:292.14000000000004px;width:10.3px;height:10px;border:1px solid #c3c3c3;background:#ececec;"></div>
<div style="position:absolute;left:28.4px;top:304.72px;width:1151.3px;height:15.38px;background:#fffbc4;border-bottom:1px solid #ece9c0;"></div>
<div class="t" style="left:215.5px;top:306.82000000000005px;color:#1a1a1a;">410</div>
<svg style="left:238px;top:308.32000000000005px" width="11" height="9"><path d="M3,0.5 H8 V4.5 H10.5 V8.5 H0.5 V4.5 H3 Z" fill="#fff" stroke="#4a4a14" stroke-width="1.2"/></svg>
<div class="t" style="left:281.8px;width:150px;text-align:right;top:306.82000000000005px;font-weight:bold;color:#111;letter-spacing:0.75px;">6.200,00</div>
<div style="position:absolute;left:367.4px;top:310.82000000000005px;width:3.5px;height:3.5px;background:#6b6b1f;"></div>
<div class="t" style="left:428.9000000000001px;width:150px;text-align:right;top:306.82000000000005px;font-weight:bold;color:#111;letter-spacing:0.75px;">6.200,00</div>
<div style="position:absolute;left:515.0px;top:310.82000000000005px;width:3.5px;height:3.5px;background:#6b6b1f;"></div>
<div style="position:absolute;left:28.4px;top:320.1px;width:1151.3px;height:15.38px;background:#e7eaee;"></div>
<div style="position:absolute;left:211.4px;top:320.1px;width:36.79999999999998px;height:15.38px;background:#fffbc4;"></div>
<div style="position:absolute;left:98.1px;top:334.48px;width:113.30000000000001px;height:1px;background:#d2d3d5;"></div>
<div style="position:absolute;left:248.2px;top:334.48px;width:931.5px;height:1px;background:#d2d3d5;"></div>
<div style="position:absolute;left:97.6px;top:320.1px;width:1px;height:15.38px;background:#d2d3d5;"></div>
<div style="position:absolute;left:210.9px;top:320.1px;width:1px;height:15.38px;background:#d2d3d5;"></div>
<div style="position:absolute;left:247.7px;top:320.1px;width:1px;height:15.38px;background:#d2d3d5;"></div>
<div style="position:absolute;left:363.7px;top:320.1px;width:1px;height:15.38px;background:#d2d3d5;"></div>
<div style="position:absolute;left:438.1px;top:320.1px;width:1px;height:15.38px;background:#d2d3d5;"></div>
<div style="position:absolute;left:511.3px;top:320.1px;width:1px;height:15.38px;background:#d2d3d5;"></div>
<div style="position:absolute;left:585.2px;top:320.1px;width:1px;height:15.38px;background:#d2d3d5;"></div>
<div style="position:absolute;left:606.1px;top:320.1px;width:1px;height:15.38px;background:#d2d3d5;"></div>
<div style="position:absolute;left:659.6px;top:320.1px;width:1px;height:15.38px;background:#d2d3d5;"></div>
<div style="position:absolute;left:719.0px;top:320.1px;width:1px;height:15.38px;background:#d2d3d5;"></div>
<div style="position:absolute;left:781.0px;top:320.1px;width:1px;height:15.38px;background:#d2d3d5;"></div>
<div style="position:absolute;left:842.5px;top:320.1px;width:1px;height:15.38px;background:#d2d3d5;"></div>
<div style="position:absolute;left:880.3px;top:320.1px;width:1px;height:15.38px;background:#d2d3d5;"></div>
<div style="position:absolute;left:947.1px;top:320.1px;width:1px;height:15.38px;background:#d2d3d5;"></div>
<div style="position:absolute;left:1008.0px;top:320.1px;width:1px;height:15.38px;background:#d2d3d5;"></div>
<div style="position:absolute;left:1032.3px;top:320.1px;width:1px;height:15.38px;background:#d2d3d5;"></div>
<div style="position:absolute;left:1088.2px;top:320.1px;width:1px;height:15.38px;background:#d2d3d5;"></div>
<div style="position:absolute;left:1126.9px;top:320.1px;width:1px;height:15.38px;background:#d2d3d5;"></div>
<div class="t" style="left:102.4px;top:322.20000000000005px;color:#1e1e1e;text-decoration:underline;">P001/10001/422/0-HZ</div>
<div class="t" style="left:215.5px;top:322.20000000000005px;color:#1a1a1a;">422</div>
<div class="t" style="left:252.6px;top:322.20000000000005px;color:#1e1e1e;">Wartung Heizung</div>
<div class="t" style="left:281.8px;width:150px;text-align:right;top:322.20000000000005px;color:#1e1e1e;">798,00</div>
<div class="t" style="left:428.9000000000001px;width:150px;text-align:right;top:322.20000000000005px;color:#1e1e1e;">798,00</div>
<div class="t" style="left:589.3px;top:322.20000000000005px;color:#1e1e1e;">V0</div>
<div class="t" style="left:1092.6px;top:322.20000000000005px;color:#1e1e1e;text-decoration:underline;">15</div>
<div style="position:absolute;left:1149.1px;top:322.90000000000003px;width:10.3px;height:10px;border:1px solid #c3c3c3;background:#ececec;"></div>
<div style="position:absolute;left:28.4px;top:335.48px;width:1151.3px;height:15.38px;background:#fffbc4;border-bottom:1px solid #ece9c0;"></div>
<div class="t" style="left:215.5px;top:337.58000000000004px;color:#1a1a1a;">422</div>
<svg style="left:238px;top:339.08000000000004px" width="11" height="9"><path d="M3,0.5 H8 V4.5 H10.5 V8.5 H0.5 V4.5 H3 Z" fill="#fff" stroke="#4a4a14" stroke-width="1.2"/></svg>
<div class="t" style="left:281.8px;width:150px;text-align:right;top:337.58000000000004px;font-weight:bold;color:#111;letter-spacing:0.75px;">798,00</div>
<div style="position:absolute;left:367.4px;top:341.58000000000004px;width:3.5px;height:3.5px;background:#6b6b1f;"></div>
<div class="t" style="left:428.9000000000001px;width:150px;text-align:right;top:337.58000000000004px;font-weight:bold;color:#111;letter-spacing:0.75px;">798,00</div>
<div style="position:absolute;left:515.0px;top:341.58000000000004px;width:3.5px;height:3.5px;background:#6b6b1f;"></div>
<div style="position:absolute;left:28.4px;top:350.86px;width:1151.3px;height:15.38px;background:#e7eaee;"></div>
<div style="position:absolute;left:211.4px;top:350.86px;width:36.79999999999998px;height:15.38px;background:#fffbc4;"></div>
<div style="position:absolute;left:98.1px;top:365.24px;width:113.30000000000001px;height:1px;background:#d2d3d5;"></div>
<div style="position:absolute;left:248.2px;top:365.24px;width:931.5px;height:1px;background:#d2d3d5;"></div>
<div style="position:absolute;left:97.6px;top:350.86px;width:1px;height:15.38px;background:#d2d3d5;"></div>
<div style="position:absolute;left:210.9px;top:350.86px;width:1px;height:15.38px;background:#d2d3d5;"></div>
<div style="position:absolute;left:247.7px;top:350.86px;width:1px;height:15.38px;background:#d2d3d5;"></div>
<div style="position:absolute;left:363.7px;top:350.86px;width:1px;height:15.38px;background:#d2d3d5;"></div>
<div style="position:absolute;left:438.1px;top:350.86px;width:1px;height:15.38px;background:#d2d3d5;"></div>
<div style="position:absolute;left:511.3px;top:350.86px;width:1px;height:15.38px;background:#d2d3d5;"></div>
<div style="position:absolute;left:585.2px;top:350.86px;width:1px;height:15.38px;background:#d2d3d5;"></div>
<div style="position:absolute;left:606.1px;top:350.86px;width:1px;height:15.38px;background:#d2d3d5;"></div>
<div style="position:absolute;left:659.6px;top:350.86px;width:1px;height:15.38px;background:#d2d3d5;"></div>
<div style="position:absolute;left:719.0px;top:350.86px;width:1px;height:15.38px;background:#d2d3d5;"></div>
<div style="position:absolute;left:781.0px;top:350.86px;width:1px;height:15.38px;background:#d2d3d5;"></div>
<div style="position:absolute;left:842.5px;top:350.86px;width:1px;height:15.38px;background:#d2d3d5;"></div>
<div style="position:absolute;left:880.3px;top:350.86px;width:1px;height:15.38px;background:#d2d3d5;"></div>
<div style="position:absolute;left:947.1px;top:350.86px;width:1px;height:15.38px;background:#d2d3d5;"></div>
<div style="position:absolute;left:1008.0px;top:350.86px;width:1px;height:15.38px;background:#d2d3d5;"></div>
<div style="position:absolute;left:1032.3px;top:350.86px;width:1px;height:15.38px;background:#d2d3d5;"></div>
<div style="position:absolute;left:1088.2px;top:350.86px;width:1px;height:15.38px;background:#d2d3d5;"></div>
<div style="position:absolute;left:1126.9px;top:350.86px;width:1px;height:15.38px;background:#d2d3d5;"></div>
<div class="t" style="left:102.4px;top:352.96000000000004px;color:#1e1e1e;text-decoration:underline;">P001/10001/423/0-HZ</div>
<div class="t" style="left:215.5px;top:352.96000000000004px;color:#1a1a1a;">423</div>
<div class="t" style="left:252.6px;top:352.96000000000004px;color:#1e1e1e;">Lohn Wartung Heizung</div>
<div class="t" style="left:281.8px;width:150px;text-align:right;top:352.96000000000004px;color:#1e1e1e;">450,11</div>
<div class="t" style="left:428.9000000000001px;width:150px;text-align:right;top:352.96000000000004px;color:#1e1e1e;">450,11</div>
<div class="t" style="left:589.3px;top:352.96000000000004px;color:#1e1e1e;">V0</div>
<div class="t" style="left:1092.6px;top:352.96000000000004px;color:#1e1e1e;text-decoration:underline;">15</div>
<div style="position:absolute;left:1149.1px;top:353.66px;width:10.3px;height:10px;border:1px solid #c3c3c3;background:#ececec;"></div>
<div style="position:absolute;left:28.4px;top:366.24px;width:1151.3px;height:15.38px;background:#fffbc4;border-bottom:1px solid #ece9c0;"></div>
<div class="t" style="left:215.5px;top:368.34000000000003px;color:#1a1a1a;">423</div>
<svg style="left:238px;top:369.84000000000003px" width="11" height="9"><path d="M3,0.5 H8 V4.5 H10.5 V8.5 H0.5 V4.5 H3 Z" fill="#fff" stroke="#4a4a14" stroke-width="1.2"/></svg>
<div class="t" style="left:281.8px;width:150px;text-align:right;top:368.34000000000003px;font-weight:bold;color:#111;letter-spacing:0.75px;">450,11</div>
<div style="position:absolute;left:367.4px;top:372.34000000000003px;width:3.5px;height:3.5px;background:#6b6b1f;"></div>
<div class="t" style="left:428.9000000000001px;width:150px;text-align:right;top:368.34000000000003px;font-weight:bold;color:#111;letter-spacing:0.75px;">450,11</div>
<div style="position:absolute;left:515.0px;top:372.34000000000003px;width:3.5px;height:3.5px;background:#6b6b1f;"></div>
<div style="position:absolute;left:28.4px;top:381.62px;width:1151.3px;height:15.38px;background:#e7eaee;"></div>
<div style="position:absolute;left:211.4px;top:381.62px;width:36.79999999999998px;height:15.38px;background:#fffbc4;"></div>
<div style="position:absolute;left:98.1px;top:396.0px;width:113.30000000000001px;height:1px;background:#d2d3d5;"></div>
<div style="position:absolute;left:248.2px;top:396.0px;width:931.5px;height:1px;background:#d2d3d5;"></div>
<div style="position:absolute;left:97.6px;top:381.62px;width:1px;height:15.38px;background:#d2d3d5;"></div>
<div style="position:absolute;left:210.9px;top:381.62px;width:1px;height:15.38px;background:#d2d3d5;"></div>
<div style="position:absolute;left:247.7px;top:381.62px;width:1px;height:15.38px;background:#d2d3d5;"></div>
<div style="position:absolute;left:363.7px;top:381.62px;width:1px;height:15.38px;background:#d2d3d5;"></div>
<div style="position:absolute;left:438.1px;top:381.62px;width:1px;height:15.38px;background:#d2d3d5;"></div>
<div style="position:absolute;left:511.3px;top:381.62px;width:1px;height:15.38px;background:#d2d3d5;"></div>
<div style="position:absolute;left:585.2px;top:381.62px;width:1px;height:15.38px;background:#d2d3d5;"></div>
<div style="position:absolute;left:606.1px;top:381.62px;width:1px;height:15.38px;background:#d2d3d5;"></div>
<div style="position:absolute;left:659.6px;top:381.62px;width:1px;height:15.38px;background:#d2d3d5;"></div>
<div style="position:absolute;left:719.0px;top:381.62px;width:1px;height:15.38px;background:#d2d3d5;"></div>
<div style="position:absolute;left:781.0px;top:381.62px;width:1px;height:15.38px;background:#d2d3d5;"></div>
<div style="position:absolute;left:842.5px;top:381.62px;width:1px;height:15.38px;background:#d2d3d5;"></div>
<div style="position:absolute;left:880.3px;top:381.62px;width:1px;height:15.38px;background:#d2d3d5;"></div>
<div style="position:absolute;left:947.1px;top:381.62px;width:1px;height:15.38px;background:#d2d3d5;"></div>
<div style="position:absolute;left:1008.0px;top:381.62px;width:1px;height:15.38px;background:#d2d3d5;"></div>
<div style="position:absolute;left:1032.3px;top:381.62px;width:1px;height:15.38px;background:#d2d3d5;"></div>
<div style="position:absolute;left:1088.2px;top:381.62px;width:1px;height:15.38px;background:#d2d3d5;"></div>
<div style="position:absolute;left:1126.9px;top:381.62px;width:1px;height:15.38px;background:#d2d3d5;"></div>
<div class="t" style="left:102.4px;top:383.72px;color:#1e1e1e;text-decoration:underline;">P001/10001/446/0-HZ</div>
<div class="t" style="left:215.5px;top:383.72px;color:#1a1a1a;">446</div>
<div class="t" style="left:252.6px;top:383.72px;color:#1e1e1e;">Abrechnungskosten HZ</div>
<div class="t" style="left:281.8px;width:150px;text-align:right;top:383.72px;color:#1e1e1e;">305,00</div>
<div class="t" style="left:428.9000000000001px;width:150px;text-align:right;top:383.72px;color:#1e1e1e;">305,00</div>
<div class="t" style="left:589.3px;top:383.72px;color:#1e1e1e;">V0</div>
<div class="t" style="left:1092.6px;top:383.72px;color:#1e1e1e;text-decoration:underline;">15</div>
<div style="position:absolute;left:1149.1px;top:384.42px;width:10.3px;height:10px;border:1px solid #c3c3c3;background:#ececec;"></div>
<div style="position:absolute;left:28.4px;top:397.0px;width:1151.3px;height:15.38px;background:#fffbc4;border-bottom:1px solid #ece9c0;"></div>
<div class="t" style="left:215.5px;top:399.1px;color:#1a1a1a;">446</div>
<svg style="left:238px;top:400.6px" width="11" height="9"><path d="M3,0.5 H8 V4.5 H10.5 V8.5 H0.5 V4.5 H3 Z" fill="#fff" stroke="#4a4a14" stroke-width="1.2"/></svg>
<div class="t" style="left:281.8px;width:150px;text-align:right;top:399.1px;font-weight:bold;color:#111;letter-spacing:0.75px;">305,00</div>
<div style="position:absolute;left:367.4px;top:403.1px;width:3.5px;height:3.5px;background:#6b6b1f;"></div>
<div class="t" style="left:428.9000000000001px;width:150px;text-align:right;top:399.1px;font-weight:bold;color:#111;letter-spacing:0.75px;">305,00</div>
<div style="position:absolute;left:515.0px;top:403.1px;width:3.5px;height:3.5px;background:#6b6b1f;"></div>
<div style="position:absolute;left:28.4px;top:412.38px;width:1151.3px;height:15.38px;background:#fff526;border-bottom:1px solid #ece9c0;"></div>
<svg style="left:30px;top:415.98px" width="11" height="9"><path d="M3,0.5 H8 V4.5 H10.5 V8.5 H0.5 V4.5 H3 Z" fill="#fff" stroke="#4a4a14" stroke-width="1.2"/></svg>
<div class="t" style="left:281.8px;width:150px;text-align:right;top:414.48px;font-weight:bold;color:#111;letter-spacing:0.75px;">8.704,50</div>
<div style="position:absolute;left:367.4px;top:418.48px;width:3.5px;height:3.5px;background:#6b6b1f;"></div>
<div style="position:absolute;left:375.0px;top:418.48px;width:3.5px;height:3.5px;background:#6b6b1f;"></div>
<div class="t" style="left:428.9000000000001px;width:150px;text-align:right;top:414.48px;font-weight:bold;color:#111;letter-spacing:0.75px;">8.704,50</div>
<div style="position:absolute;left:515.0px;top:418.48px;width:3.5px;height:3.5px;background:#6b6b1f;"></div>
<div style="position:absolute;left:522.6px;top:418.48px;width:3.5px;height:3.5px;background:#6b6b1f;"></div>
<div class="t" style="left:790.8000000000001px;width:150px;text-align:right;top:414.48px;font-weight:bold;color:#111;letter-spacing:0.75px;">0</div>
<div style="position:absolute;left:884.0px;top:418.48px;width:3.5px;height:3.5px;background:#6b6b1f;"></div>
<div style="position:absolute;left:891.6px;top:418.48px;width:3.5px;height:3.5px;background:#6b6b1f;"></div>
<div class="t" style="left:1011.5px;top:414.48px;font-weight:bold;color:#111;letter-spacing:0.6px;">M3</div>
<div style="position:absolute;left:1179.2px;top:166.3px;width:1px;height:261.46000000000004px;background:#d0d0d0;"></div>
<div style="position:absolute;left:9.8px;top:557.3px;width:745px;height:170px;background:#fff;"></div>
<div style="position:absolute;left:11.3px;top:569.3px;width:743px;height:1.6px;background:#0a78c6;"></div>
<div style="position:absolute;left:15.7px;top:558.3px;white-space:nowrap;font-size:10px;letter-spacing:-0.13px;color:#222;line-height:12px;">Zusatzinformationen</div>
<div style="position:absolute;left:16.7px;top:577.8px;white-space:nowrap;font-size:10px;color:#222;line-height:12px;">Abrechnungsperiode</div>
<div style="position:absolute;left:122px;top:574.3px;width:231.5px;height:15.4px;background:#fff;border:1px solid #d6d6d6;"></div>
<div style="position:absolute;left:125.3px;top:576px;white-space:nowrap;font-size:10.3px;color:#222;line-height:12px;">01.01.2013-31.12.2013</div>
<svg style="left:343.8px;top:580px" width="6.5" height="4.5"><path d="M0.6,0.6 L3.2,3.4 L5.8,0.6" fill="none" stroke="#555" stroke-width="1.5"/></svg>
<div style="position:absolute;left:14.7px;top:592.1px;width:735.5px;height:123px;background:#e8ebee;border:2px solid #555;border-top-color:#7c7c7c;border-left-color:#777;"></div>
<div style="position:absolute;left:24.5px;top:596px;white-space:nowrap;font-size:10px;color:#222;line-height:11.2px;">Zusatzinformation P001/10001/9000/0-HZ:<br>Abrechnung bis 30.06.2014 erforderlich</div>
<div style="position:absolute;left:9.3px;top:3.4px;width:32.3px;height:16.2px;border:1.3px solid #b4bcc8;background:#f0f0f0;"></div>
<svg style="left:12.5px;top:4.5px" width="15" height="11" viewBox="0 0 15 11"><path d="M0.5,0.5 H8.5 V7 L5,7 L2.5,10 V7 H0.5Z" fill="#f6a800" stroke="#e06000" stroke-width="1"/><rect x="8.5" y="1.5" width="5" height="7.5" fill="#cfe4f6" stroke="#1f6fae" stroke-width="1.3"/><path d="M10,3.3 L12.2,5.2 L10,7Z" fill="#1f6fae"/><path d="M7,7.5 L9,9.5 L7,11.5 L5,9.5Z" fill="#fff" stroke="#555" stroke-width="0.8"/></svg>
<svg style="left:35.5px;top:12.3px" width="4" height="4" viewBox="0 0 4 4"><path d="M3.6,0 V3.6 H0Z" fill="#111"/></svg>
<svg style="left:10.8px;top:32.5px" width="12.5" height="10" viewBox="0 0 12.5 10"><path d="M0.7,5 L5.5,0.6 V3 H11.8 V7 H5.5 V9.4Z" fill="#d3e6f5" stroke="#7fa9cc" stroke-width="1.1"/></svg>
<svg style="left:30.6px;top:32.5px" width="12.5" height="10" viewBox="0 0 12.5 10"><path d="M11.8,5 L7,0.6 V3 H0.7 V7 H7 V9.4Z" fill="#d3e6f5" stroke="#7fa9cc" stroke-width="1.1"/></svg>
<div style="position:absolute;left:49.7px;top:32px;width:1.2px;height:11px;background:#b9b9b9;"></div>
<div style="position:absolute;left:135.5px;top:32px;width:1.2px;height:11px;background:#b9b9b9;"></div>
<div style="position:absolute;left:162.7px;top:32px;width:1.2px;height:11px;background:#b9b9b9;"></div>
<div style="position:absolute;left:201.9px;top:32px;width:1.2px;height:11px;background:#b9b9b9;"></div>
<div style="position:absolute;left:268.1px;top:32px;width:1.2px;height:11px;background:#b9b9b9;"></div>
<div style="position:absolute;left:334.3px;top:32px;width:1.2px;height:11px;background:#b9b9b9;"></div>
<div style="position:absolute;left:400.9px;top:32px;width:1.2px;height:11px;background:#b9b9b9;"></div>
<svg style="left:57px;top:30.5px" width="14" height="13" viewBox="0 0 14 13"><circle cx="2.6" cy="4.2" r="2" fill="#fff" stroke="#666" stroke-width="1.3"/><circle cx="7.4" cy="4.2" r="2" fill="#fff" stroke="#666" stroke-width="1.3"/><path d="M1,2 L2,0.5 M9,2 L8,0.5" stroke="#666" stroke-width="1"/><path d="M5.5,11.5 L12.6,4.2" stroke="#1d74b8" stroke-width="3" stroke-linecap="round"/></svg>
<svg style="left:78.3px;top:31px" width="10" height="12.5" viewBox="0 0 10 12.5"><path d="M0.7,0.7 H6 L9.2,3.9 V11.8 H0.7Z" fill="#fff" stroke="#555" stroke-width="1.3"/><path d="M6,0.7 V3.9 H9.2Z" fill="#444"/></svg>
<svg style="left:95.8px;top:31px" width="14" height="12.5" viewBox="0 0 14 12.5"><path d="M0.6,0.6 H8.5 L9.6,1.8 V9 H2 L0.6,7.6Z" fill="#cfe8b0" stroke="#2e8b2e" stroke-width="1.1"/><rect x="1.2" y="1.2" width="7.5" height="2.2" fill="#5fb030"/><rect x="4.3" y="4.3" width="8.8" height="7.6" fill="#f9a21b" stroke="#e8590c" stroke-width="1.1"/><rect x="7.3" y="6.6" width="4.2" height="3.4" fill="#fff7d0"/></svg>
<svg style="left:116.4px;top:31px" width="12" height="12.5" viewBox="0 0 12 12.5"><rect x="0.2" y="1.2" width="7.5" height="7.6" fill="#f9b000" stroke="#f07b00" stroke-width="0.7"/><rect x="4.2" y="4.8" width="6.8" height="7.2" fill="#fff" stroke="#777" stroke-width="1.1"/><path d="M7,4.6 V1.8 Q8.4,0.3 9.8,1.8 V4" fill="none" stroke="#555" stroke-width="1"/></svg>
<svg style="left:143px;top:31px" width="13.5" height="12" viewBox="0 0 13.5 12"><path d="M2.8,6.8 V3.4 L5.2,1 H9.6 V4" fill="none" stroke="#666" stroke-width="1"/><rect x="0.4" y="6.6" width="4.6" height="4.9" fill="#4aa01c" stroke="#2d7a14" stroke-width="0.8"/><rect x="7.4" y="4" width="5.4" height="4.8" fill="#ffc400" stroke="#f06a00" stroke-width="0.9"/></svg>
<svg style="left:165.5px;top:31.8px" width="9.5" height="8" viewBox="0 0 9.5 8"><path d="M0,0.5 Q2.5,-0.5 4.6,0.8 Q7,2 9.2,0.6 V7 Q7,8 4.6,6.8 Q2.5,5.6 0,7Z" fill="#b8e08e"/></svg>
<svg style="left:182px;top:31.2px" width="13.5" height="12.5" viewBox="0 0 13.5 12.5"><path d="M3.5,0.6 H9 L12.6,4.2 V11.8 H3.5Z" fill="#fff" stroke="#666" stroke-width="1.1"/><path d="M9,0.6 V4.2 H12.6Z" fill="#555"/><path d="M2.2,5.6 A3.6,3.6 0 0 1 8.6,4.4" fill="none" stroke="#1747b8" stroke-width="1.7"/><path d="M0,5.3 L2.4,7.8 L4.6,5.2Z" fill="#1747b8"/><path d="M9.2,7.4 A3.6,3.6 0 0 1 2.8,8.6" fill="none" stroke="#1747b8" stroke-width="1.7"/><path d="M11.2,7.6 L9,5.2 L6.8,7.8Z" fill="#1747b8"/></svg>
<svg style="left:209.3px;top:31px" width="14" height="12.5" viewBox="0 0 14 12.5"><path d="M0.6,0.6 H6.8 L9.6,3.2 V8.6 H0.6Z" fill="#fff" stroke="#666" stroke-width="1"/><path d="M6.8,0.6 V3.2 H9.6Z" fill="#444"/><rect x="3" y="5" width="5" height="7.2" fill="#fff" stroke="#444" stroke-width="1.1"/><path d="M8.6,6.2 H12.8 L11.2,9.6 H8.6Z" fill="#3aa01a"/></svg>
<svg style="left:228.4px;top:32px" width="13" height="10.5" viewBox="0 0 13 10.5"><path d="M1.2,2.5 Q3,5.2 1.2,8 M3.4,1.5 Q5.8,5.2 3.4,9" fill="none" stroke="#a8cce8" stroke-width="1"/><rect x="6.8" y="0.2" width="5.8" height="10" fill="#6fb0e0"/><path d="M8.6,2.8 L11,5.2 L8.6,7.6Z" fill="#fff"/></svg>
<svg style="left:247.8px;top:31px" width="14.5" height="12.5" viewBox="0 0 14.5 12.5"><path d="M0.3,6.5 L6,4 L12.8,5 V8.6 L6.5,12.4 L0.3,9.8Z" fill="#f7a11a" stroke="#f07000" stroke-width="0.6"/><path d="M3,7.5 L6,9 L8,7.5" fill="none" stroke="#fff" stroke-width="1.2"/><circle cx="10" cy="4" r="3.5" fill="#a8d0f0" stroke="#1c6aa8" stroke-width="1.1"/><circle cx="10" cy="4" r="1.2" fill="#fff"/></svg>
<svg style="left:275.8px;top:31px" width="13.5" height="12.2" viewBox="0 0 13.5 12.2"><path d="M5.8,0.6 H10.2 L12.8,3.2 V10.6 H5.8Z" fill="#eef4f8" stroke="#9fbfd6" stroke-width="1"/><circle cx="4.6" cy="7.2" r="4" fill="#e4eef6" stroke="#a9bcc9" stroke-width="1"/><path d="M4.6,5.2 V9.4" stroke="#8fb0c8" stroke-width="1.2"/></svg>
<svg style="left:294.8px;top:31px" width="14" height="12.5" viewBox="0 0 14 12.5"><path d="M3.5,0.5 H9.2 L10.5,2 V5 H3.5Z" fill="#fbfbfb" stroke="#aaa" stroke-width="0.8"/><rect x="0.5" y="5" width="13" height="4.8" rx="1.2" fill="#cfe3f2" stroke="#7faecf" stroke-width="1"/><rect x="1.5" y="10.8" width="11" height="1.4" fill="#86b3d4"/></svg>
<svg style="left:314.5px;top:30.8px" width="14" height="12" viewBox="0 0 14 12"><path d="M0.5,8 Q3,3.5 7,4 L10,4.5 Q12.8,6 12.2,9 Q10,11.8 5.5,11 Z" fill="#f5d67d"/><path d="M5.8,0.8 H13 M9.4,0.8 V8" stroke="#7aa7d0" stroke-width="1.8"/></svg>
<svg style="left:341.8px;top:31px" width="13.5" height="12" viewBox="0 0 13.5 12"><rect x="3.6" y="0.3" width="6.4" height="3.6" fill="#ffc000" stroke="#f06a00" stroke-width="0.8"/><path d="M6.8,4 V5.6 M2.6,7.2 V5.6 H11 V7.2" fill="none" stroke="#555" stroke-width="0.9"/><rect x="0.2" y="7.1" width="4.8" height="4.5" fill="#55aa22" stroke="#2f7f12" stroke-width="0.8"/><rect x="8.4" y="7.1" width="4.8" height="4.5" fill="#55aa22" stroke="#2f7f12" stroke-width="0.8"/></svg>
<svg style="left:361.5px;top:30.5px" width="13.5" height="13.5" viewBox="0 0 13.5 13.5"><rect x="4.8" y="0.8" width="7.4" height="1.5" fill="#f58a1a"/><rect x="2.6" y="3.2" width="6.9" height="1.4" fill="#1f3f98"/><rect x="5.8" y="5.5" width="5.8" height="1.4" fill="#2a58b0"/><rect x="3.1" y="8" width="6.4" height="1.5" fill="#1f3f98"/><rect x="0.6" y="10" width="12.2" height="3" fill="#5d9fd8" stroke="#1a5a98" stroke-width="0.9"/></svg>
<svg style="left:381px;top:31.8px" width="12.5" height="9" viewBox="0 0 12.5 9"><rect x="0.6" y="0.6" width="11.2" height="7.8" fill="#fff" stroke="#555" stroke-width="1.2"/><path d="M4.6,0.6 V8.4" stroke="#555" stroke-width="1"/><path d="M6,2.8 H10.8 M6,4.6 H10.8 M6,6.4 H10.8" stroke="#c9b9a0" stroke-width="0.6"/><rect x="5.2" y="1.2" width="6" height="1" fill="#9cc6ea"/></svg>
<svg style="left:408.2px;top:30.9px" width="13" height="11.8" viewBox="0 0 13 11.8"><rect x="0.9" y="0.9" width="11" height="10" fill="#fff" stroke="#1c80c8" stroke-width="1.8"/><rect x="5.5" y="2.6" width="2" height="1.8" fill="#1060b0"/><path d="M4.6,5.2 H7.5 V8.6 H8.4 V9.4 H4.6 V8.6 H5.5 V6 H4.6Z" fill="#1060b0"/></svg>
<svg style="left:298px;top:61px" width="16" height="12" viewBox="0 0 16 12"><path d="M1.2,5.9 L3.5,3.5 L5.4,6.5 L3.5,8.4Z" fill="#fff" stroke="#111" stroke-width="1.2" stroke-linejoin="round"/><path d="M6.6,7.1 L8.5,5.6 L10.1,7.8 L8.5,10.6Z" fill="#fff" stroke="#111" stroke-width="1.2" stroke-linejoin="round"/><path d="M5.4,6.5 L6.6,7.1 M3.5,3.5 L6,1.2 L7.4,2.4 M10.1,6.4 L12.9,3.4 L14.1,4.6" fill="none" stroke="#111" stroke-width="1.1"/></svg>
<svg style="left:231px;top:117.4px" width="6.5" height="4.5" viewBox="0 0 6.5 4.5"><path d="M0.6,0.6 L3.2,3.4 L5.8,0.6" fill="none" stroke="#555" stroke-width="1.5"/></svg>
<svg style="left:244px;top:117px" width="9.5" height="5" viewBox="0 0 9.5 5"><path d="M0,4.9 L4.75,0 L9.5,4.9Z" fill="#111"/></svg>
<svg style="left:261.4px;top:117.7px" width="9" height="5" viewBox="0 0 9 5"><path d="M0,0 L4.5,5 L9,0Z" fill="#111"/></svg>
<svg style="left:282.5px;top:112.5px" width="13" height="14" viewBox="0 0 13 14"><circle cx="3.7" cy="3.6" r="2.6" fill="#fff" stroke="#777" stroke-width="0.8"/><circle cx="9.5" cy="3.6" r="2.8" fill="#fba71b" stroke="#f08a00" stroke-width="0.6"/><circle cx="3.7" cy="10.2" r="2.8" fill="#fba71b" stroke="#f08a00" stroke-width="0.6"/><circle cx="9.5" cy="10.2" r="2.8" fill="#fba71b" stroke="#f08a00" stroke-width="0.6"/><path d="M9.5,2 V3.8 H8.4 M3.7,2.2 V3.6 M9.5,8.6 V10.4 H8.4 M3,9.6 L3.7,10.6 L4.4,9.6" fill="none" stroke="#555" stroke-width="0.7"/></svg>
<svg style="left:300px;top:114px" width="11" height="11" viewBox="0 0 11 11"><circle cx="5.5" cy="5.5" r="4.8" fill="#fff" stroke="#555" stroke-width="1.1"/><path d="M5.5,2.5 V5.8 H8" fill="none" stroke="#555" stroke-width="1.1"/></svg>
<div style="position:absolute;left:29px;top:132.2px;width:19.799999999999997px;height:15.5px;background:#ebebeb;border:1px solid #c4c4c4;"></div>
<div style="position:absolute;left:56.8px;top:132.2px;width:19.0px;height:15.5px;background:#ebebeb;border:1px solid #c4c4c4;"></div>
<div style="position:absolute;left:78px;top:132.2px;width:18.700000000000003px;height:15.5px;background:#ebebeb;border:1px solid #c4c4c4;"></div>
<div style="position:absolute;left:99px;top:132.2px;width:18.799999999999997px;height:15.5px;background:#ebebeb;border:1px solid #c4c4c4;"></div>
<div style="position:absolute;left:120.2px;top:132.2px;width:18.700000000000003px;height:15.5px;background:#ebebeb;border:1px solid #c4c4c4;"></div>
<div style="position:absolute;left:141.3px;top:132.2px;width:26.899999999999977px;height:15.5px;background:#ebebeb;border:1px solid #c4c4c4;"></div>
<div style="position:absolute;left:158px;top:133.5px;width:1px;height:13px;background:#e0e0e0;"></div>
<svg style="left:162.6px;top:141px" width="3.2" height="3.2" viewBox="0 0 3.2 3.2"><path d="M3.2,0 V3.2 H0Z" fill="#111"/></svg>
<div style="position:absolute;left:176.3px;top:132.2px;width:27.399999999999977px;height:15.5px;background:#ebebeb;border:1px solid #c4c4c4;"></div>
<div style="position:absolute;left:194.5px;top:133.5px;width:1px;height:13px;background:#e0e0e0;"></div>
<svg style="left:198.1px;top:141px" width="3.2" height="3.2" viewBox="0 0 3.2 3.2"><path d="M3.2,0 V3.2 H0Z" fill="#111"/></svg>
<div style="position:absolute;left:205.7px;top:132.2px;width:27.200000000000017px;height:15.5px;background:#ebebeb;border:1px solid #c4c4c4;"></div>
<div style="position:absolute;left:224px;top:133.5px;width:1px;height:13px;background:#e0e0e0;"></div>
<svg style="left:227.3px;top:141px" width="3.2" height="3.2" viewBox="0 0 3.2 3.2"><path d="M3.2,0 V3.2 H0Z" fill="#111"/></svg>
<div style="position:absolute;left:241.2px;top:132.2px;width:19.5px;height:15.5px;background:#ebebeb;border:1px solid #c4c4c4;"></div>
<div style="position:absolute;left:262.1px;top:132.2px;width:29.5px;height:15.5px;background:#ebebeb;border:1px solid #c4c4c4;"></div>
<div style="position:absolute;left:282px;top:133.5px;width:1px;height:13px;background:#e0e0e0;"></div>
<svg style="left:286.0px;top:141px" width="3.2" height="3.2" viewBox="0 0 3.2 3.2"><path d="M3.2,0 V3.2 H0Z" fill="#111"/></svg>
<div style="position:absolute;left:294.1px;top:132.2px;width:29.5px;height:15.5px;background:#ebebeb;border:1px solid #c4c4c4;"></div>
<div style="position:absolute;left:314px;top:133.5px;width:1px;height:13px;background:#e0e0e0;"></div>
<svg style="left:318.0px;top:141px" width="3.2" height="3.2" viewBox="0 0 3.2 3.2"><path d="M3.2,0 V3.2 H0Z" fill="#111"/></svg>
<div style="position:absolute;left:325.4px;top:132.2px;width:27.30000000000001px;height:15.5px;background:#ebebeb;border:1px solid #c4c4c4;"></div>
<div style="position:absolute;left:343px;top:133.5px;width:1px;height:13px;background:#e0e0e0;"></div>
<svg style="left:347.09999999999997px;top:141px" width="3.2" height="3.2" viewBox="0 0 3.2 3.2"><path d="M3.2,0 V3.2 H0Z" fill="#111"/></svg>
<div style="position:absolute;left:361px;top:132.2px;width:19px;height:15.5px;background:#ebebeb;border:1px solid #c4c4c4;"></div>
<div style="position:absolute;left:388.3px;top:132.2px;width:19.0px;height:15.5px;background:#ebebeb;border:1px solid #c4c4c4;"></div>
<div style="position:absolute;left:416.2px;top:132.2px;width:85.69999999999999px;height:15.5px;background:#ebebeb;border:1px solid #c4c4c4;"></div>
<div style="position:absolute;left:51.8px;top:134.5px;width:1.1px;height:10.5px;background:#c2c2c2;"></div>
<div style="position:absolute;left:171.3px;top:134.5px;width:1.1px;height:10.5px;background:#c2c2c2;"></div>
<div style="position:absolute;left:236.3px;top:134.5px;width:1.1px;height:10.5px;background:#c2c2c2;"></div>
<div style="position:absolute;left:355.9px;top:134.5px;width:1.1px;height:10.5px;background:#c2c2c2;"></div>
<div style="position:absolute;left:383.7px;top:134.5px;width:1.1px;height:10.5px;background:#c2c2c2;"></div>
<div style="position:absolute;left:411.0px;top:134.5px;width:1.1px;height:10.5px;background:#c2c2c2;"></div>
<svg style="left:32.5px;top:133.6px" width="13" height="12.5" viewBox="0 0 13 12.5"><circle cx="4.8" cy="4.6" r="3.9" fill="#fff" stroke="#555" stroke-width="1.3"/><rect x="2.6" y="3.2" width="5" height="2.6" fill="#5cb82a"/><path d="M7.6,7.4 L11.6,11.3" stroke="#444" stroke-width="2" stroke-linecap="round"/><rect x="2.5" y="11" width="3" height="0.8" fill="#444"/><path d="M9.5,1 V6" stroke="#b8d888" stroke-width="1.4"/></svg>
<svg style="left:60.5px;top:133.8px" width="12" height="11.5" viewBox="0 0 12 11.5"><rect x="3.6" y="0.4" width="4.6" height="2.4" rx="0.8" fill="#56b020" stroke="#3c8a12" stroke-width="0.5"/><rect x="1.8" y="4.2" width="8.4" height="2.8" rx="1" fill="#3d8ed6" stroke="#1f64a8" stroke-width="0.6"/><rect x="0.2" y="8.4" width="11.6" height="2.8" rx="0.8" fill="#56b020" stroke="#3c8a12" stroke-width="0.5"/></svg>
<svg style="left:81.4px;top:133.8px" width="12" height="11.5" viewBox="0 0 12 11.5"><rect x="0.2" y="0.4" width="11.6" height="2.8" rx="0.8" fill="#56b020" stroke="#3c8a12" stroke-width="0.5"/><rect x="1.8" y="4.2" width="8.4" height="2.8" rx="1" fill="#3d8ed6" stroke="#1f64a8" stroke-width="0.6"/><rect x="3.6" y="8.4" width="4.6" height="2.4" rx="0.8" fill="#56b020" stroke="#3c8a12" stroke-width="0.5"/></svg>
<svg style="left:102.8px;top:134px" width="11.5" height="11.8" viewBox="0 0 11.5 11.8"><path d="M0.8,3 Q0.8,0.7 3,0.7 Q4.6,0.7 4.6,3 V4.5 H6.8 V3 Q6.8,0.7 8.5,0.7 Q10.7,0.7 10.7,3 V11 H6.8 V8 H4.6 V11 H0.8Z" fill="#b8d8f0" stroke="#2a78b5" stroke-width="1.3"/></svg>
<svg style="left:123.5px;top:134px" width="12" height="11.8" viewBox="0 0 12 11.8"><path d="M0.8,3 Q0.8,0.7 2.8,0.7 Q4.4,0.7 4.4,3 V4.5 H6.4 V3 Q6.4,0.7 8,0.7 Q10,0.7 10,3 V11 H6.4 V8 H4.4 V11 H0.8Z" fill="#cfe2f2" stroke="#9fc4e0" stroke-width="1.2"/><circle cx="8.6" cy="7.4" r="2.8" fill="#fff" stroke="#a9c9e3" stroke-width="0.8"/><path d="M8.6,5.6 V9.2 M6.8,7.4 H10.4" stroke="#9fc4e0" stroke-width="1"/></svg>
<svg style="left:144px;top:134px" width="12" height="11.5" viewBox="0 0 12 11.5"><path d="M0.6,0.8 H11.2 L7,5.4 V10.8 L4.6,9.6 V5.4Z" fill="#9fcaec" stroke="#1f72b0" stroke-width="1.2"/><circle cx="9" cy="6.6" r="1.6" fill="#fff" stroke="#1f72b0" stroke-width="0.9"/></svg>
<svg style="left:180px;top:134px" width="10.5" height="11" viewBox="0 0 10.5 11"><path d="M0.6,0.6 H9.8 V3 H4.6 L7,5.5 L4.6,8 H9.8 V10.4 H0.6 V8.8 L3.8,5.5 L0.6,2.2Z" fill="#5cc21c" stroke="#2f8a10" stroke-width="0.9"/></svg>
<svg style="left:208.4px;top:134px" width="13" height="12" viewBox="0 0 13 12"><rect x="0.2" y="0.2" width="6.2" height="5.8" fill="#f9a51a"/><rect x="6.2" y="5.2" width="6.4" height="6.4" fill="#e2461a"/><path d="M0.5,11.8 L11,0.8" stroke="#7a8ca8" stroke-width="0.7"/><path d="M1.5,1.5 H5 M1.5,4.5 H5 M2.5,3 H4" stroke="#ffe7a0" stroke-width="0.8"/><path d="M7.5,7 H11 M7.5,10 H11 M8.5,8.5 H10" stroke="#ffb090" stroke-width="0.8"/></svg>
<svg style="left:243.8px;top:133.6px" width="13.5" height="12.6" viewBox="0 0 13.5 12.6"><path d="M3.3,0.5 H8.5 L9.5,1.5 V4.5 H3.3Z" fill="#fff" stroke="#444" stroke-width="0.9"/><rect x="0.3" y="4.5" width="13" height="5.6" rx="1.5" fill="#2f82c0"/><rect x="2" y="6.2" width="9.5" height="1.6" fill="#a9d0ee"/><rect x="1" y="10.5" width="11.5" height="1.8" fill="#1a5fa0"/></svg>
<svg style="left:265px;top:134px" width="14" height="12" viewBox="0 0 14 12"><path d="M5.5,0.5 H10 L13,3.3 V9 H5.5Z" fill="#cfe4f5" stroke="#2a7ab8" stroke-width="1"/><circle cx="4.5" cy="7.3" r="4.1" fill="#dbe7f0" stroke="#666" stroke-width="1.1"/><path d="M4.5,5 V9.6" stroke="#2a7ab8" stroke-width="1.2"/></svg>
<svg style="left:297.4px;top:134px" width="13.5" height="12" viewBox="0 0 13.5 12"><rect x="0.5" y="0.5" width="6.2" height="9.4" fill="#cfe4f5" stroke="#1f6fb2" stroke-width="1"/><path d="M4,1.6 H9.5 L12.2,4.2 V11.4 H4Z" fill="#fff" stroke="#555" stroke-width="0.9"/><path d="M2.8,5.6 H6.6 V3.6 L10,6.8 L6.6,10 V8 H2.8Z" fill="#4aaa1e"/></svg>
<svg style="left:327.6px;top:134.3px" width="13.5" height="10.5" viewBox="0 0 13.5 10.5"><rect x="3.6" y="0.4" width="9.4" height="9.6" fill="#fff" stroke="#555" stroke-width="0.9"/><path d="M6.8,0.4 V10 M3.6,3.6 H13 M3.6,6.8 H13" stroke="#555" stroke-width="0.9"/><rect x="0.2" y="3.8" width="5.2" height="3.6" fill="#fbb300" stroke="#f06a00" stroke-width="0.8"/></svg>
<svg style="left:364px;top:134px" width="14" height="11.8" viewBox="0 0 14 11.8"><rect x="0.5" y="0.5" width="4.5" height="11" fill="#b9d2ec" stroke="#1f6aa8" stroke-width="1"/><rect x="5" y="7" width="4.5" height="4.5" fill="#5cb22a"/><rect x="8" y="1" width="4" height="4" fill="#fbb400"/><rect x="9" y="3.6" width="4.8" height="7.9" fill="#e24a1a"/></svg>
<svg style="left:391.9px;top:134.1px" width="12" height="10.8" viewBox="0 0 12 10.8"><rect x="0.8" y="0.8" width="10.2" height="9.2" fill="#fff" stroke="#1c80c8" stroke-width="1.6"/><rect x="5" y="2.4" width="1.9" height="1.6" fill="#1060b0"/><path d="M4.2,4.8 H6.9 V7.9 H7.7 V8.6 H4.2 V7.9 H5 V5.5 H4.2Z" fill="#1060b0"/></svg>
<svg style="left:417.8px;top:134.3px" width="13.5" height="10.5" viewBox="0 0 13.5 10.5"><path d="M0.5,0.5 H8 L9.5,1.8 V9.8 H0.5Z" fill="#f4f4f4" stroke="#777" stroke-width="0.9"/><rect x="3.4" y="3.2" width="9.6" height="6.6" fill="#f9b400" stroke="#e86a00" stroke-width="0.9"/><rect x="3.4" y="5" width="9.6" height="1.8" fill="#3a3a6a"/></svg>
<svg style="left:13px;top:152.8px" width="12.5" height="12.5" viewBox="0 0 12.5 12.5"><path d="M0.6,0.6 H6.8 L9.8,3.6 V11.6 H0.6Z" fill="#fff" stroke="#555" stroke-width="1.1"/><rect x="1.8" y="2.2" width="5.6" height="2" fill="#62b81e"/><rect x="1.8" y="5.2" width="5.6" height="2" fill="#62b81e"/><rect x="1.8" y="8.2" width="5.6" height="2" fill="#62b81e"/><path d="M7.5,7 L11.6,9.6 L7.5,12Z" fill="#fff" stroke="#3a52a8" stroke-width="0.9"/></svg>
<div style="position:absolute;left:432.3px;top:134.3px;white-space:nowrap;font-size:9.8px;color:#222;line-height:12px;">LS 000789161</div>
</body></html>
